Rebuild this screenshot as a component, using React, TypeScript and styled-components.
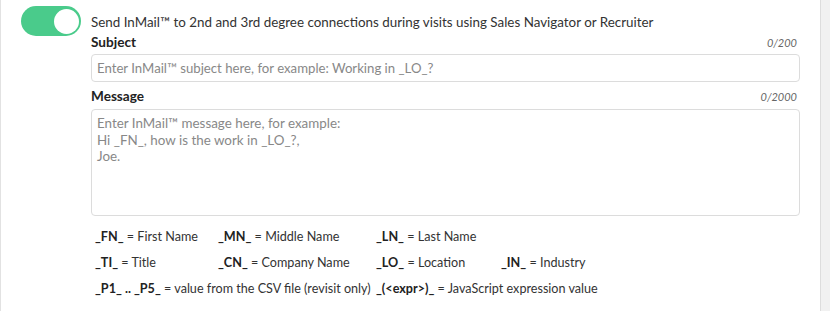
import styled, { createGlobalStyle } from 'styled-components';

const GlobalStyle = createGlobalStyle`
  html, body {
    margin: 0;
    padding: 0;
    background: #ffffff;
  }
  body {
    font-family: Lato, 'Noto Sans', sans-serif;
    color: #333333;
  }
`;

const Page = styled.div`
  display: flex;
  width: 830px;
  height: 311px;
  overflow: hidden;
`;

const Panel = styled.section`
  width: 821px;
  border-left: 1px solid #e2e2e2;
  border-right: 1px solid #dddddd;
  background: #ffffff;
  padding: 6px 20px 0 20px;
  box-sizing: border-box;
  display: flex;
  gap: 10px;
`;

const Side = styled.div`
  flex: 1;
  background: #f1f1f1;
`;

const Toggle = styled.button<{ on: boolean }>`
  flex: none;
  position: relative;
  width: 60px;
  height: 30px;
  border: none;
  border-radius: 15px;
  padding: 0;
  background: ${(p) => (p.on ? '#4acb8b' : '#cccccc')};
  cursor: pointer;

  &::after {
    content: '';
    position: absolute;
    top: 2.5px;
    left: ${(p) => (p.on ? '32.5px' : '2.5px')};
    width: 25px;
    height: 25px;
    border-radius: 50%;
    background: #ffffff;
  }
`;

const Body = styled.div`
  flex: 1;
  display: flex;
  flex-direction: column;
  padding-top: 6px;
`;

const Intro = styled.div`
  font-size: 13.4px;
  line-height: 20px;
  color: #333333;
`;

const LabelRow = styled.div<{ gap?: number }>`
  display: flex;
  justify-content: space-between;
  align-items: baseline;
  margin-top: ${(p) => p.gap ?? 0}px;
`;

const Label = styled.label`
  font-size: 13.6px;
  line-height: 20px;
  font-weight: 700;
  color: #222222;
`;

const Counter = styled.span`
  font-size: 11px;
  font-style: italic;
  color: #666666;
  padding-right: 3px;
`;

const Input = styled.input`
  margin-top: 2px;
  height: 28px;
  box-sizing: border-box;
  border: 1px solid #dcdcdc;
  border-radius: 4px;
  padding: 0 5px;
  font: 13.2px Lato, 'Noto Sans', sans-serif;
  color: #333333;
  outline: none;

  &::placeholder {
    color: #888888;
  }
`;

const TextArea = styled.textarea`
  margin-top: 3px;
  height: 107px;
  box-sizing: border-box;
  border: 1px solid #dcdcdc;
  border-radius: 4px;
  padding: 5px 5px;
  font: 13.4px/16.5px Lato, 'Noto Sans', sans-serif;
  color: #333333;
  resize: none;
  outline: none;

  &::placeholder {
    color: #888888;
  }
`;

const Legend = styled.div`
  margin-top: 7px;
  padding-left: 4px;
  display: grid;
  grid-template-columns: 123px 158px 125px auto;
  grid-auto-rows: 26px;
  align-items: center;
  font-size: 12.6px;
  color: #333333;
  white-space: nowrap;
`;

const Item = styled.span<{ span?: number }>`
  grid-column: ${(p) => (p.span ? `span ${p.span}` : 'auto')};

  b {
    color: #222222;
  }
`;

const vars: { key: string; text: string; span?: number }[][] = [
  [
    { key: '_FN_', text: 'First Name' },
    { key: '_MN_', text: 'Middle Name' },
    { key: '_LN_', text: 'Last Name' },
  ],
  [
    { key: '_TI_', text: 'Title' },
    { key: '_CN_', text: 'Company Name' },
    { key: '_LO_', text: 'Location' },
    { key: '_IN_', text: 'Industry' },
  ],
  [
    { key: '_P1_ .. _P5_', text: 'value from the CSV file (revisit only)', span: 2 },
    { key: '_(<expr>)_', text: 'JavaScript expression value', span: 2 },
  ],
];

export default function App() {
  return (
    <>
      <GlobalStyle />
      <Page>
        <Panel>
          <Toggle on aria-label="Send InMail" />
          <Body>
            <Intro>
              Send InMail™ to 2nd and 3rd degree connections during visits using Sales Navigator or Recruiter
            </Intro>
            <LabelRow>
              <Label>Subject</Label>
              <Counter>0/200</Counter>
            </LabelRow>
            <Input placeholder="Enter InMail™ subject here, for example: Working in _LO_?" />
            <LabelRow gap={4}>
              <Label>Message</Label>
              <Counter>0/2000</Counter>
            </LabelRow>
            <TextArea
              placeholder={'Enter InMail™ message here, for example:\nHi _FN_, how is the work in _LO_?,\nJoe.'}
            />
            <Legend>
              {vars.map((row, i) => (
                <div key={i} style={{ display: 'contents' }}>
                  {row.map((v) => (
                    <Item key={v.key} span={v.span}>
                      <b>{v.key}</b> = {v.text}
                    </Item>
                  ))}
                  {row.length === 3 && <span />}
                </div>
              ))}
            </Legend>
          </Body>
        </Panel>
        <Side />
      </Page>
    </>
  );
}
